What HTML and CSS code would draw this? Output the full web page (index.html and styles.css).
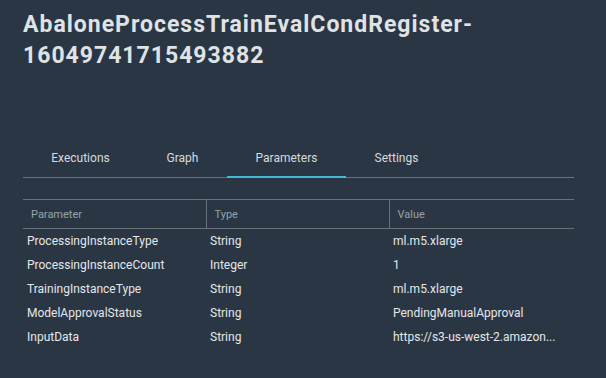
FILE: index.html
```html
<!DOCTYPE html>
<html lang="en">

<head>
  <meta charset="UTF-8" />
  <meta name="viewport" content="width=device-width, initial-scale=1.0" />
  <title>Pipeline</title>
  <link rel="stylesheet" href="styles.css">
</head>

<body>
  <h1 class="pageTitle">AbaloneProcessTrainEvalCondRegister-<br />16049741715493882</h1>

  <!-- Tabs -->
  <div class="tabs">
    <div class="tab tabExec">Executions</div>
    <div class="tab tabGraph">Graph</div>
    <div class="tab tabParams active">Parameters</div>
    <div class="tab tabSettings">Settings</div>
  </div>

  <!-- Parameters table -->
  <table class="paramTable">
    <colgroup>
      <col class="colName" />
      <col class="colType" />
      <col />
    </colgroup>
    <thead>
      <tr>
        <th>Parameter</th>
        <th>Type</th>
        <th>Value</th>
      </tr>
    </thead>
    <tbody>
      <tr>
        <td>ProcessingInstanceType</td>
        <td>String</td>
        <td>ml.m5.xlarge</td>
      </tr>
      <tr>
        <td>ProcessingInstanceCount</td>
        <td>Integer</td>
        <td>1</td>
      </tr>
      <tr>
        <td>TrainingInstanceType</td>
        <td>String</td>
        <td>ml.m5.xlarge</td>
      </tr>
      <tr>
        <td>ModelApprovalStatus</td>
        <td>String</td>
        <td>PendingManualApproval</td>
      </tr>
      <tr>
        <td>InputData</td>
        <td>String</td>
        <td>https://s3-us-west-2.amazon...</td>
      </tr>
    </tbody>
  </table>
</body>

</html>
```

FILE: styles.css
```css
body {
  margin: 0;
  padding: 0 32px 0 23px;
  background-color: #2b3645;
  color: #d5dbdb;
  font-family: Roboto, "Liberation Sans", sans-serif;
}

.pageTitle {
  margin: 9px 0 0 0;
  font-size: 23px;
  line-height: 31px;
  font-weight: bold;
  letter-spacing: 1px;
  color: #dfe3e6;
}

.tabs {
  display: flex;
  margin-top: 68px;
  border-bottom: 1px solid #687078;
}

.tab {
  padding: 12px 0 11px 0;
  font-size: 12px;
  text-align: center;
  color: #d5dbdb;
  border-bottom: 2px solid transparent;
  margin-bottom: -1px;
}

.tabExec {
  width: 115px;
}

.tabGraph {
  width: 89px;
}

.tabParams {
  width: 119px;
}

.tabSettings {
  width: 101px;
}

.tab.active {
  border-bottom-color: #44b9d6;
}

.paramTable {
  width: 100%;
  margin-top: 21px;
  border-collapse: collapse;
  font-size: 12px;
}

.colName {
  width: 183px;
}

.colType {
  width: 183px;
}

.paramTable th {
  text-align: left;
  font-weight: normal;
  font-size: 11px;
  color: #95a5a6;
  height: 28px;
  padding: 0 8px;
  border-top: 1px solid #687078;
  border-bottom: 1px solid #687078;
}

.paramTable th + th {
  border-left: 1px solid #687078;
}

.paramTable td {
  height: 24px;
  line-height: 24px;
  padding: 0 4px;
  color: #e3e7e8;
}
```
